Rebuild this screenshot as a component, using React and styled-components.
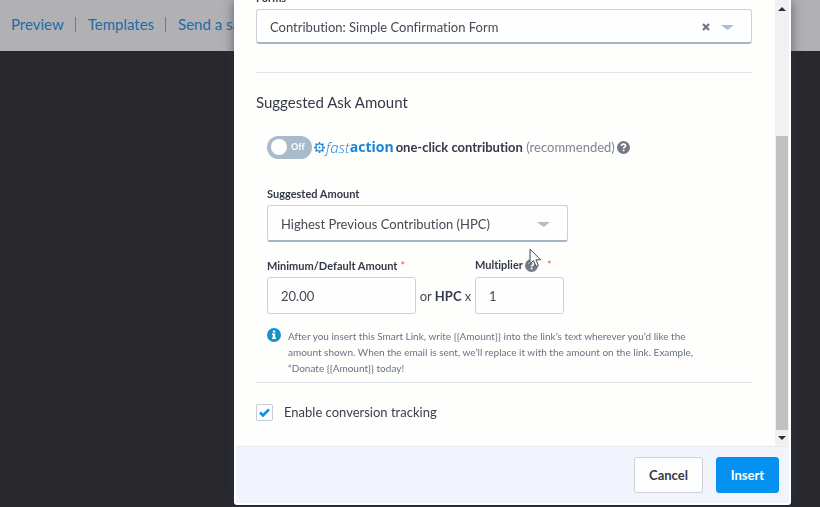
import React, { useState } from "react";
import styled, { createGlobalStyle } from "styled-components";

const GlobalStyle = createGlobalStyle`
  *, *::before, *::after { box-sizing: border-box; }
  body {
    margin: 0;
    background: #29282d;
    color: #3a404d;
    font-family: Lato, "Open Sans", sans-serif;
    font-size: 13px;
    line-height: 20px;
    font-variant-ligatures: none;
    overflow: hidden;
  }
  button, input, select {
    font: inherit;
    font-variant-ligatures: none;
    color: inherit;
    margin: 0;
  }
`;

const TopBar = styled.nav`
  display: flex;
  align-items: center;
  height: 51px;
  padding: 0 0 3px 11px;
  background: #b1b1b3;
  white-space: nowrap;
`;

const NavLink = styled.a`
  color: #1b6ca8;
  font-size: 15px;
  text-decoration: none;

  & + & {
    margin-left: 11px;
  }
  & + &::before {
    content: "";
    display: inline-block;
    width: 1px;
    height: 15px;
    margin-right: 12px;
    vertical-align: -2px;
    background: #77787e;
  }
`;

const Overlay = styled.div`
  position: fixed;
  inset: 0;
  display: flex;
  padding: 0 29px 2px 234px;
`;

const Dialog = styled.section`
  flex: 1;
  min-width: 0;
  display: flex;
  flex-direction: column;
  border: solid #ffffff;
  border-width: 0 2px 2px;
  border-radius: 0 0 3px 3px;
  background: #fefefd;
  box-shadow: 0 0 12px rgba(40, 55, 70, 0.65);
`;

const Scroller = styled.div`
  flex: 1;
  min-height: 0;
  display: flex;
  overflow: hidden;
`;

const Form = styled.form`
  flex: 1;
  min-width: 0;
  padding: 0 23px 0 20px;
`;

const ScrollBar = styled.div`
  display: flex;
  flex-direction: column;
  width: 14px;
  background: #f1f1f4;
`;

const ScrollButton = styled.button`
  display: grid;
  place-items: center;
  height: 16px;
  padding: 0;
  border: 0;
  background: none;
`;

const ScrollTrack = styled.div`
  flex: 1;
  display: flex;
  flex-direction: column;
  justify-content: flex-end;
  padding: 0 1px;
`;

const ScrollThumb = styled.div`
  height: 71%;
  background: #c1c1c2;
`;

const Label = styled.label`
  display: block;
  font-size: 11px;
  line-height: 16px;
  font-weight: 700;
  color: #343a49;
`;

const ClippedLabel = styled(Label)`
  margin-top: -10px;
  margin-bottom: 3px;
`;

const SpacedLabel = styled(Label)`
  margin-top: 27px;
  margin-bottom: 3px;
`;

const SelectBox = styled.div`
  display: grid;
  max-width: ${(p) => p.$max || "none"};
  height: ${(p) => p.$height};
  align-items: center;

  & > * {
    grid-area: 1 / 1;
  }
`;

const Select = styled.select`
  width: 100%;
  height: 100%;
  appearance: none;
  padding: 1px 60px 0 13px;
  border: 1px solid #c8d1dc;
  border-bottom: 2px solid #a5b4c8;
  border-radius: 3px;
  background: #fefefe;
  color: #444a55;
`;

const SelectMarks = styled.div`
  justify-self: end;
  display: flex;
  align-items: center;
  gap: 11px;
  margin-right: 18px;
  pointer-events: none;
`;

const ClearButton = styled.button`
  display: grid;
  padding: 0;
  border: 0;
  background: none;
  pointer-events: auto;
`;

const Divider = styled.hr`
  height: 1px;
  margin: ${(p) => p.$top || "0"} 0 0;
  border: 0;
  background: #e2e5ea;
`;

const Heading = styled.h2`
  margin: 19px 0 23px;
  font-size: 15px;
  line-height: 20px;
  font-weight: 400;
  color: #343a47;
`;

const Group = styled.div`
  padding: 0 11px;
`;

const ToggleRow = styled.div`
  display: flex;
  align-items: center;
  height: 24px;
  white-space: nowrap;
`;

const Toggle = styled.button`
  display: flex;
  align-items: center;
  gap: 4px;
  width: 45px;
  height: 23px;
  padding: 0 4px;
  border: 0;
  border-radius: 12px;
  background: #a9bacb;
  color: #f4f8fb;
  font-size: 9px;
  line-height: 12px;
  font-weight: 900;

  &::before {
    content: "";
    flex: none;
    width: 16px;
    height: 16px;
    border-radius: 50%;
    background: #ffffff;
  }
`;

const Brand = styled.span`
  display: flex;
  align-items: center;
  margin: 0 2px;
  color: #1a84d8;
  font-family: "Open Sans", sans-serif;
  font-size: 14px;

  em {
    margin-left: 1px;
    font-size: 15px;
    font-weight: 300;
  }
  strong {
    font-weight: 700;
  }
`;

const ToggleText = styled.span`
  color: #7d8593;

  strong {
    color: #343a49;
  }
`;

const HelpButton = styled.button`
  display: grid;
  padding: 0;
  margin-left: 2px;
  border: 0;
  background: none;
`;

const AmountRow = styled.div`
  display: flex;
  align-items: flex-end;
  margin-top: 15px;
`;

const Field = styled.div`
  width: ${(p) => p.$width};
`;

const FieldHead = styled.div`
  display: flex;
  align-items: center;
  height: 16px;
  margin-bottom: ${(p) => p.$gap};
  white-space: nowrap;
`;

const Required = styled.span`
  margin-left: ${(p) => p.$gap};
  color: #e8605f;
  font-size: 11px;
  line-height: 16px;
`;

const TextInput = styled.input`
  display: block;
  width: 100%;
  height: 37px;
  padding: 0 13px;
  border: 1px solid #c8d1dd;
  border-radius: 3px;
  background: #fefefe;
  color: #444a55;
`;

const Between = styled.span`
  width: 59px;
  padding-bottom: 8px;
  text-align: center;
  white-space: nowrap;
  color: #444a55;

  strong {
    color: #343a49;
  }
`;

const CursorAnchor = styled.span`
  position: relative;
  display: grid;
`;

const Cursor = styled.svg`
  position: absolute;
  left: 6px;
  top: -11px;
  pointer-events: none;
`;

const Note = styled.div`
  display: flex;
  gap: 7px;
  max-width: 450px;
  margin: 14px 0 6px;
`;

const NoteIcon = styled.svg`
  flex: none;
`;

const NoteText = styled.p`
  margin: 0;
  font-size: 10px;
  line-height: 16px;
  color: #687282;
`;

const CheckLabel = styled.label`
  display: flex;
  align-items: center;
  gap: 11px;
  margin-top: 19px;
`;

const CheckBox = styled.input`
  appearance: none;
  width: 17px;
  height: 17px;
  border: 1px solid #c3cddb;
  border-radius: 2px;
  background: #fefefe;
`;

const CheckHolder = styled.span`
  display: grid;
  place-items: center;

  & > * {
    grid-area: 1 / 1;
  }
  svg {
    pointer-events: none;
  }
`;

const Footer = styled.footer`
  display: flex;
  justify-content: flex-end;
  align-items: center;
  gap: 13px;
  height: 57px;
  padding: 0 10px;
  border-top: 1px solid #e8eaee;
  background: #f1f4fc;
`;

const Button = styled.button`
  width: ${(p) => (p.$primary ? "63px" : "69px")};
  height: 36px;
  padding: 0;
  border: 1px solid ${(p) => (p.$primary ? "#0491ef" : "#ccd2db")};
  border-radius: 3px;
  background: ${(p) => (p.$primary ? "#0491ef" : "#fefefe")};
  color: ${(p) => (p.$primary ? "#ffffff" : "#343a49")};
  font-weight: 700;
`;

function Caret() {
  return (
    <svg width="13" height="6" viewBox="0 0 13 6" aria-hidden="true">
      <path d="M0 1h13L8 5Q6.500 6 5 5Z" fill="#a9bfd6" />
    </svg>
  );
}

function ScrollArrow({ down }) {
  return (
    <svg width="8" height="5" viewBox="0 0 8 5" aria-hidden="true">
      <path d={down ? "M0 0h8L4 4Z" : "M0 5h8L4 1Z"} fill="#2f3036" />
    </svg>
  );
}

function HelpIcon() {
  return (
    <svg width="13" height="13" viewBox="0 0 13 13" aria-hidden="true">
      <circle cx="6.500" cy="6.500" r="6.500" fill="#737a85" />
      <path
        d="M4.400 5Q4.500 3.100 6.500 3.100T8.600 4.800Q8.600 5.800 7.400 6.300Q6.600 6.700 6.600 7.500"
        fill="none"
        stroke="#ffffff"
        strokeWidth="1.700"
      />
      <rect x="5.700" y="8.600" width="1.800" height="1.700" fill="#ffffff" />
    </svg>
  );
}

function Gear() {
  const teeth = [0, 45, 90, 135, 180, 225, 270, 315];
  return (
    <svg width="11" height="11" viewBox="0 0 11 11" aria-hidden="true">
      <circle cx="5.500" cy="5.500" r="3.500" fill="none" stroke="#1a84d8" strokeWidth="1.200" />
      <circle cx="5.500" cy="5.500" r="1" fill="#1a84d8" />
      {teeth.map((angle) => (
        <rect
          key={angle}
          x="4.700"
          y="0"
          width="1.600"
          height="2"
          fill="#1a84d8"
          transform={`rotate(${angle} 5.500 5.500)`}
        />
      ))}
    </svg>
  );
}

const NOTE =
  "After you insert this Smart Link, write {{Amount}} into the link’s text wherever you’d like the amount shown. When the email is sent, we’ll replace it with the amount on the link. Example, “Donate {{Amount}} today!";

export default function App() {
  const [tracking, setTracking] = useState(true);
  const [oneClick, setOneClick] = useState(false);

  return (
    <>
      <GlobalStyle />
      <TopBar>
        <NavLink href="#preview">Preview</NavLink>
        <NavLink href="#templates">Templates</NavLink>
        <NavLink href="#sample">Send a sample</NavLink>
      </TopBar>
      <Overlay>
        <Dialog role="dialog" aria-label="Insert Smart Link">
          <Scroller>
            <Form>
              <ClippedLabel htmlFor="form">Forms</ClippedLabel>
              <SelectBox $height="35px">
                <Select id="form">
                  <option>Contribution: Simple Confirmation Form</option>
                </Select>
                <SelectMarks>
                  <ClearButton type="button" aria-label="Clear">
                    <svg width="8" height="8" viewBox="0 0 8 8">
                      <path d="M1 1l6 6M7 1l-6 6" stroke="#6d7484" strokeWidth="2.200" />
                    </svg>
                  </ClearButton>
                  <Caret />
                </SelectMarks>
              </SelectBox>
              <Divider $top="28px" />
              <Heading>Suggested Ask Amount</Heading>
              <Group>
                <ToggleRow>
                  <Toggle
                    type="button"
                    role="switch"
                    aria-checked={oneClick}
                    onClick={() => setOneClick(!oneClick)}
                  >
                    {oneClick ? "On" : "Off"}
                  </Toggle>
                  <Brand>
                    <Gear />
                    <em>fast</em>
                    <strong>action</strong>
                  </Brand>
                  <ToggleText>
                    <strong>one-click contribution</strong> (recommended)
                  </ToggleText>
                  <HelpButton type="button" aria-label="About one-click contribution">
                    <HelpIcon />
                  </HelpButton>
                </ToggleRow>
                <SpacedLabel htmlFor="suggested">Suggested Amount</SpacedLabel>
                <SelectBox $height="37px" $max="301px">
                  <Select id="suggested">
                    <option>Highest Previous Contribution (HPC)</option>
                  </Select>
                  <SelectMarks>
                    <Caret />
                  </SelectMarks>
                </SelectBox>
                <AmountRow>
                  <Field $width="149px">
                    <FieldHead $gap="3px">
                      <Label htmlFor="minimum">Minimum/Default Amount</Label>
                      <Required $gap="3px">*</Required>
                    </FieldHead>
                    <TextInput id="minimum" defaultValue="20.00" />
                  </Field>
                  <Between>
                    or <strong>HPC</strong> x
                  </Between>
                  <Field $width="89px">
                    <FieldHead $gap="4px">
                      <Label htmlFor="multiplier">Multiplier</Label>
                      <CursorAnchor>
                        <HelpButton type="button" aria-label="About the multiplier">
                          <HelpIcon />
                        </HelpButton>
                        <Cursor width="13" height="20" viewBox="0 0 13 20" aria-hidden="true">
                          <path
                            d="M1 1v15l3.500-3.300 2.600 5.800 2.400-1.100-2.600-5.600H11.500Z"
                            fill="#fdfdfd"
                            stroke="#4a4d55"
                          />
                        </Cursor>
                      </CursorAnchor>
                      <Required $gap="9px">*</Required>
                    </FieldHead>
                    <TextInput id="multiplier" defaultValue="1" />
                  </Field>
                </AmountRow>
                <Note>
                  <NoteIcon width="14" height="14" viewBox="0 0 14 14" aria-hidden="true">
                    <circle cx="7" cy="7" r="7" fill="#1793c9" />
                    <path d="M5.900 2.500h2.300v2H5.900ZM5 5.600h3.200v3.900H9V11H5V9.500h.9V7H5Z" fill="#ffffff" />
                  </NoteIcon>
                  <NoteText>{NOTE}</NoteText>
                </Note>
              </Group>
              <Divider />
              <CheckLabel>
                <CheckHolder>
                  <CheckBox
                    type="checkbox"
                    checked={tracking}
                    onChange={(e) => setTracking(e.target.checked)}
                  />
                  {tracking && (
                    <svg width="11" height="9" viewBox="0 0 11 9" aria-hidden="true">
                      <path d="M1 4.500l3 3L10 1.300" fill="none" stroke="#0b8fe8" strokeWidth="2.600" />
                    </svg>
                  )}
                </CheckHolder>
                Enable conversion tracking
              </CheckLabel>
            </Form>
            <ScrollBar>
              <ScrollButton type="button" aria-label="Scroll up">
                <ScrollArrow />
              </ScrollButton>
              <ScrollTrack>
                <ScrollThumb />
              </ScrollTrack>
              <ScrollButton type="button" aria-label="Scroll down">
                <ScrollArrow down />
              </ScrollButton>
            </ScrollBar>
          </Scroller>
          <Footer>
            <Button type="button">Cancel</Button>
            <Button type="button" $primary>
              Insert
            </Button>
          </Footer>
        </Dialog>
      </Overlay>
    </>
  );
}
